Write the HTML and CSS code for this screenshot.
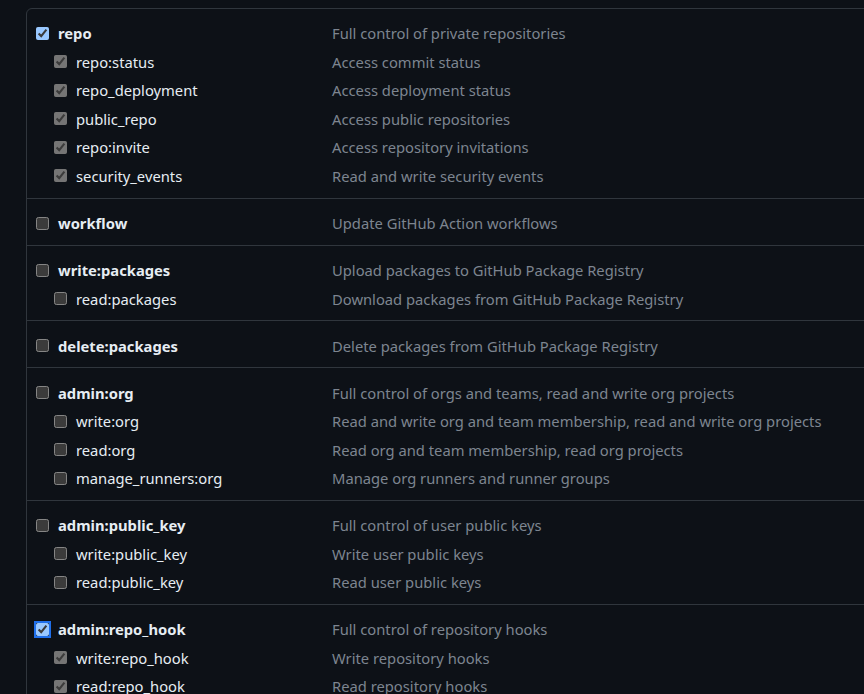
FILE: index.html
```html
<!DOCTYPE html>
<html lang="en">
<head>
<meta charset="utf-8">
<title>Scopes</title>
<link rel="stylesheet" href="styles.css">
</head>
<body>
<div class="scopes">
  <div class="group">
    <div class="row parent"><label class="name"><input type="checkbox" checked><span>repo</span></label><span class="desc">Full control of private repositories</span></div>
    <div class="row child"><label class="name"><input type="checkbox" checked disabled><span>repo:status</span></label><span class="desc">Access commit status</span></div>
    <div class="row child"><label class="name"><input type="checkbox" checked disabled><span>repo_deployment</span></label><span class="desc">Access deployment status</span></div>
    <div class="row child"><label class="name"><input type="checkbox" checked disabled><span>public_repo</span></label><span class="desc">Access public repositories</span></div>
    <div class="row child"><label class="name"><input type="checkbox" checked disabled><span>repo:invite</span></label><span class="desc">Access repository invitations</span></div>
    <div class="row child"><label class="name"><input type="checkbox" checked disabled><span>security_events</span></label><span class="desc">Read and write security events</span></div>
  </div>
  <div class="group">
    <div class="row parent"><label class="name"><input type="checkbox"><span>workflow</span></label><span class="desc">Update GitHub Action workflows</span></div>
  </div>
  <div class="group">
    <div class="row parent"><label class="name"><input type="checkbox"><span>write:packages</span></label><span class="desc">Upload packages to GitHub Package Registry</span></div>
    <div class="row child"><label class="name"><input type="checkbox"><span>read:packages</span></label><span class="desc">Download packages from GitHub Package Registry</span></div>
  </div>
  <div class="group">
    <div class="row parent"><label class="name"><input type="checkbox"><span>delete:packages</span></label><span class="desc">Delete packages from GitHub Package Registry</span></div>
  </div>
  <div class="group">
    <div class="row parent"><label class="name"><input type="checkbox"><span>admin:org</span></label><span class="desc">Full control of orgs and teams, read and write org projects</span></div>
    <div class="row child"><label class="name"><input type="checkbox"><span>write:org</span></label><span class="desc">Read and write org and team membership, read and write org projects</span></div>
    <div class="row child"><label class="name"><input type="checkbox"><span>read:org</span></label><span class="desc">Read org and team membership, read org projects</span></div>
    <div class="row child"><label class="name"><input type="checkbox"><span>manage_runners:org</span></label><span class="desc">Manage org runners and runner groups</span></div>
  </div>
  <div class="group">
    <div class="row parent"><label class="name"><input type="checkbox"><span>admin:public_key</span></label><span class="desc">Full control of user public keys</span></div>
    <div class="row child"><label class="name"><input type="checkbox"><span>write:public_key</span></label><span class="desc">Write user public keys</span></div>
    <div class="row child"><label class="name"><input type="checkbox"><span>read:public_key</span></label><span class="desc">Read user public keys</span></div>
  </div>
  <div class="group">
    <div class="row parent"><label class="name"><input type="checkbox" class="focused" checked><span>admin:repo_hook</span></label><span class="desc">Full control of repository hooks</span></div>
    <div class="row child"><label class="name"><input type="checkbox" checked disabled><span>write:repo_hook</span></label><span class="desc">Write repository hooks</span></div>
    <div class="row child"><label class="name"><input type="checkbox" checked disabled><span>read:repo_hook</span></label><span class="desc">Read repository hooks</span></div>
  </div>
</div>
</body>
</html>
```

FILE: styles.css
```css
:root {
  color-scheme: dark;
}
html, body {
  margin: 0;
  padding: 0;
  background: #0d1117;
  overflow: hidden;
  height: 694px;
}
body {
  font-family: "Noto Sans", "Liberation Sans", sans-serif;
  font-size: 14.75px;
  color: #e6edf3;
}
.scopes {
  margin: 8px 0 0 26px;
  width: 900px;
  border: 1px solid #30363d;
  border-radius: 6px;
}
.group {
  padding: 10.5px 0 7px 9px;
  border-top: 1px solid #30363d;
}
.group:first-child {
  border-top: none;
  padding-top: 10px;
  padding-bottom: 7.5px;
}
.row {
  display: flex;
  align-items: center;
  height: 28.5px;
}
.name {
  box-sizing: border-box;
  width: 296px;
  display: flex;
  align-items: center;
  gap: 9px;
  flex: none;
}
.child .name {
  padding-left: 18px;
  font-weight: 400;
}
.parent .name {
  font-weight: 700;
}
.name input {
  margin: 0;
  width: 13px;
  height: 13px;
  flex: none;
}
.focused {
  outline: 2px solid #1f6feb;
  outline-offset: 0;
}
.desc {
  color: #7d8590;
  white-space: nowrap;
}
```
